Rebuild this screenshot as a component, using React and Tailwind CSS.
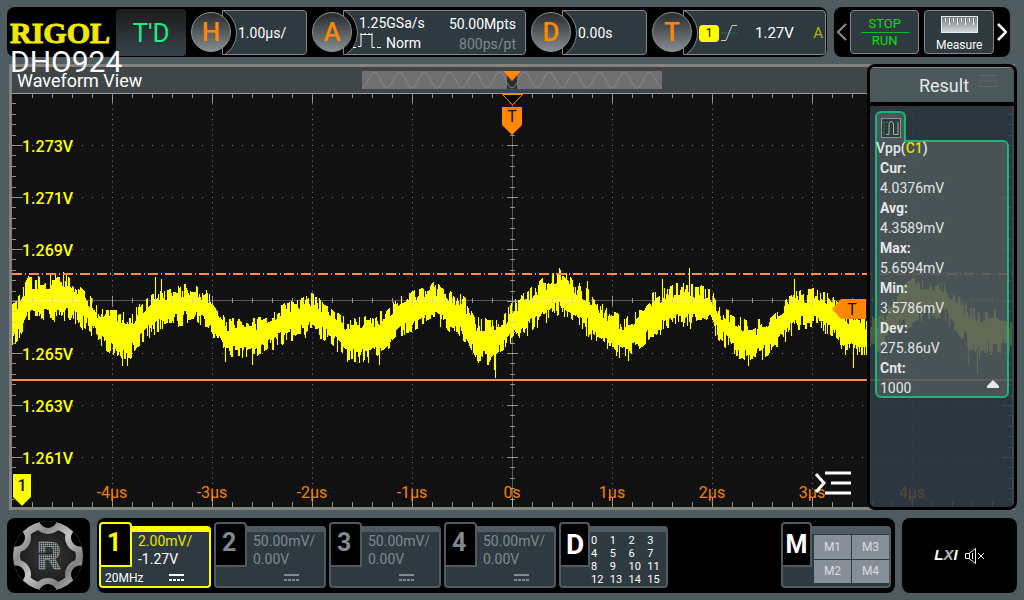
import React from "react";

const ENVELOPE = [
  [12, 308, 343], [20, 300, 330], [28, 284, 313], [40, 285, 315], [62, 280, 312], [75, 289, 316],
  [90, 302, 326], [100, 317, 340], [120, 317, 352], [130, 322, 350], [145, 306, 332], [160, 299, 322],
  [180, 291, 318], [195, 293, 314], [210, 300, 325], [225, 326, 352], [240, 324, 352], [255, 326, 353],
  [270, 320, 343], [290, 308, 333], [310, 301, 328], [330, 310, 336], [345, 325, 352], [350, 325, 354],
  [370, 323, 355], [385, 318, 346], [400, 303, 330], [420, 292, 322], [435, 290, 316], [450, 297, 326],
  [465, 306, 335], [475, 325, 354], [490, 327, 357], [505, 320, 345], [512, 310, 336], [525, 299, 328],
  [540, 288, 318], [560, 276, 306], [575, 289, 316], [590, 299, 335], [605, 316, 343], [622, 325, 352],
  [635, 321, 347], [650, 303, 331], [665, 294, 326], [680, 291, 318], [690, 291, 320], [710, 297, 319],
  [720, 314, 335], [735, 323, 347], [750, 331, 358], [765, 325, 350], [780, 311, 340], [795, 299, 322],
  [815, 295, 322], [830, 302, 328], [845, 318, 346], [866, 327, 350], [880, 320, 342], [895, 304, 328],
  [912, 285, 318], [930, 287, 310], [945, 289, 314], [960, 305, 330], [975, 318, 350], [995, 315, 345],
  [1012, 325, 346],
];

const SPIKES = {
  55: [274, 312], 63: [272, 312], 122: [320, 366], 127: [322, 366], 155: [277, 322], 161: [279, 320],
  225: [326, 362], 252: [322, 365], 379: [325, 365], 494: [330, 370], 495: [330, 378], 560: [270, 306],
  587: [281, 318], 628: [325, 361], 662: [279, 320], 689: [268, 322], 748: [330, 366], 794: [279, 324],
  853: [320, 368], 968: [315, 364], 977: [320, 374],
};

function buildWave() {
  let seed = 924;
  const rand = () => {
    seed = (seed * 1103515245 + 12345) % 2147483648;
    return seed / 2147483648;
  };
  let d = "";
  let k = 0;
  let jt = 0.5;
  let jb = 0.5;
  for (let x = 12; x <= 1012; x += 1) {
    while (k < ENVELOPE.length - 2 && ENVELOPE[k + 1][0] < x) k += 1;
    const [x0, t0, b0] = ENVELOPE[k];
    const [x1, t1, b1] = ENVELOPE[k + 1];
    const f = (x - x0) / (x1 - x0);
    if (rand() > 0.35) jt = rand();
    if (rand() > 0.35) jb = rand();
    let top = t0 + (t1 - t0) * f + 6 - jt * 15;
    let bottom = b0 + (b1 - b0) * f - 6 + jb * 15;
    if (SPIKES[x]) [top, bottom] = SPIKES[x];
    d += `M${x + 0.5} ${Math.round(top)}V${Math.round(bottom)}`;
  }
  return d;
}

const WAVE = buildWave();
const COLS = [112, 212, 312, 412, 612, 712, 812, 912];
const ROWS = [145, 197, 249, 353, 405, 457];
const VOLTS = [[145, "1.273V"], [197, "1.271V"], [249, "1.269V"], [301, "1.267V"], [353, "1.265V"], [405, "1.263V"], [457, "1.261V"]];
const TIMES = [[112, "-4µs"], [212, "-3µs"], [312, "-2µs"], [412, "-1µs"], [512, "0s"], [612, "1µs"], [712, "2µs"], [812, "3µs"], [912, "4µs"]];

function buildTicks() {
  let d = "";
  for (let x = 32; x < 1012; x += 20) {
    const big = (x - 12) % 100 === 0;
    d += `M${x + 0.5} 94v${big ? 9 : 4}M${x + 0.5} 507v-${big ? 9 : 5}M${x + 0.5} ${big ? 296 : 298}v${big ? 10 : 5}`;
  }
  for (let i = 1; i < 40; i += 1) {
    const y = Math.round(93 + i * 10.4) + 0.5;
    const big = i % 5 === 0;
    d += `M12 ${y}h${big ? 10 : 4}M1012 ${y}h-${big ? 10 : 4}M${big ? 507 : 510} ${y}h${big ? 11 : 5}`;
  }
  return d;
}

const TICKS = buildTicks();

function Plot() {
  return (
    <svg viewBox="12 93 1000 414" className="block h-auto w-full bg-[#111111]" role="img" aria-label="Channel 1 waveform">
      <g stroke="#7c7c7c" strokeWidth="1">
        {COLS.map((x) => (
          <line key={x} x1={x + 0.5} x2={x + 0.5} y1="93" y2="507" strokeDasharray="1 4.2" />
        ))}
        {ROWS.map((y) => (
          <line key={y} x1="12" x2="1012" y1={y + 0.5} y2={y + 0.5} strokeDasharray="1 9" />
        ))}
      </g>
      <g fontFamily="Roboto, sans-serif" fontSize="16" fontWeight="500" fill="#ffff00">
        {VOLTS.map(([y, t]) => (
          <text key={t} x="22" y={y + 7}>{t}</text>
        ))}
      </g>
      <path d={WAVE} stroke="#ffff00" strokeWidth="1.1" fill="none" />
      <path d="M12 300.5H1012M512.5 93V507" stroke="#ffffff" strokeOpacity="0.3" />
      <path d={TICKS} stroke="#c4c4c4" strokeOpacity="0.7" />
      <path d="M12 93.5H1012" stroke="#9a9f9f" />
      <path d="M12 274H1012" stroke="#ff8c4a" strokeWidth="2" strokeDasharray="10 3 1 3" />
      <path d="M12 380H1012" stroke="#ff8c4a" strokeWidth="2" />
      <g fontFamily="Roboto, sans-serif" fontSize="16" fill="#f58200" textAnchor="middle">
        {TIMES.map(([x, t]) => (
          <text key={t} x={x} y="498">{t}</text>
        ))}
      </g>
      <path d="M502.500 94.500H522.500L512.500 105Z" fill="#000" stroke="#ff8800" />
      <path d="M502 107H522V125L512 135L502 125Z" fill="#ff8800" />
      <text x="512" y="122" fontFamily="Roboto, sans-serif" fontSize="16" fill="#111" textAnchor="middle">T</text>
      <path d="M866 299V319H841L832 309L841 299Z" fill="#ff8800" />
      <text x="852" y="315" fontFamily="Roboto, sans-serif" fontSize="16" fill="#111" textAnchor="middle">T</text>
      <path d="M12.500 473.500H31.500V497L22 506.500L12.500 497Z" fill="#ffff00" stroke="#000" />
      <text x="22" y="491" fontFamily="Roboto, sans-serif" fontSize="16" fontWeight="500" fill="#111" textAnchor="middle">1</text>
    </svg>
  );
}

function MiniWave() {
  let d = "M0 17";
  for (let x = 0; x <= 300; x += 1) d += `L${x} ${(9 - 8 * Math.cos(((x - 12.5) / 25) * 2 * Math.PI)).toFixed(1)}`;
  d = d.replace("M0 17L", "M");
  return (
    <svg viewBox="0 0 300 18" className="block h-[18px] w-[300px] bg-[#707070]" aria-hidden="true">
      <path d={d} fill="none" stroke="#878b8b" />
      <rect x="145" width="10" height="18" fill="#2c3133" />
      <path d="M145 12q5 10 10 0" fill="none" stroke="#878b8b" />
      <path d="M141 0H159L150 10Z" fill="#ff8800" />
    </svg>
  );
}

function Knob({ letter, className, children }) {
  return (
    <button type="button" aria-label={letter} className={"relative flex h-[45px] items-stretch text-left " + className}>
      <span className="z-10 mt-[2px] flex size-10 shrink-0 items-center justify-center rounded-full border border-[#8a9398] bg-linear-to-b from-[#2a2c2e] to-[#868e92] pt-[2px] text-[26px] font-medium text-[#ff8800]">
        {letter}
      </span>
      <span className="relative -ml-[9px] flex min-w-0 flex-1 overflow-hidden rounded-r-[4px] border border-[#7f898d] bg-[#2e3940]">
        <span className="absolute -left-[38px] -top-[4px] size-[52px] rounded-full border border-[#7f898d] bg-black" />
        <span className="relative flex min-w-0 flex-1 items-center pl-[15px] pt-[2px] text-[14px] leading-5 text-white">{children}</span>
      </span>
    </button>
  );
}

function DcIcon({ color }) {
  return (
    <svg viewBox="0 0 15 7" className="h-[7px] w-[15px]" aria-label="DC coupling">
      <path d="M0 1H15" stroke={color} strokeWidth="2" />
      <path d="M0 6H15" stroke={color} strokeWidth="2" strokeDasharray="3 1" />
    </svg>
  );
}

function Channel({ n, scale, offset, limit, active }) {
  const edge = active ? "border-[#ffff00]" : "border-[#4e5b61]";
  return (
    <button type="button" className="relative h-[66px] w-28 pt-1 text-left">
      <span className={"flex h-[62px] flex-col rounded-[4px] border-2 border-t-[6px] bg-[#2e3940] pl-[37px] text-[14px] leading-[19px] " + edge}>
        <span className={active ? "whitespace-nowrap text-[#e8e800]" : "whitespace-nowrap text-[#7f898f]"}>{scale}</span>
        <span className={active ? "-mt-px text-white" : "-mt-px text-[#7f898f]"}>{offset}</span>
        <span className="-ml-[33px] flex h-[17px] items-center pr-[25px]">
          <span className="pt-px text-[12px] leading-4 text-white">{limit}</span>
          <span className="ml-auto"><DcIcon color={active ? "#ffffff" : "#7f898f"} /></span>
        </span>
      </span>
      <span className={"absolute left-0 top-0 flex h-[45px] w-[33px] items-center rounded-t-[4px] border-2 bg-black pb-[3px] pl-[6px] text-[25px] font-bold " + edge + (active ? " text-[#ffff00]" : " text-[#7f898f]")}>
        {n}
      </span>
    </button>
  );
}

function Gear() {
  const notches = [0, 60, 120, 180, 240, 300];
  return (
    <svg viewBox="0 0 83 75" className="h-[75px] w-[83px]" aria-hidden="true">
      <defs>
        <linearGradient id="steel" x1="0" y1="0" x2="1" y2="1">
          <stop offset="0" stopColor="#d8d8d8" />
          <stop offset="0.3" stopColor="#8c8c8c" />
          <stop offset="0.5" stopColor="#c4c4c4" />
          <stop offset="0.75" stopColor="#808080" />
          <stop offset="1" stopColor="#cfcfcf" />
        </linearGradient>
        <radialGradient id="core">
          <stop offset="0" stopColor="#3a3a38" />
          <stop offset="1" stopColor="#1d1d1c" />
        </radialGradient>
        <pattern id="hatch" width="2" height="2" patternUnits="userSpaceOnUse">
          <rect width="2" height="2" fill="#5c6266" />
          <rect width="1" height="1" fill="#a4a9ac" />
          <rect x="1" y="1" width="1" height="1" fill="#34393c" />
        </pattern>
        <clipPath id="disc"><circle cx="41" cy="38" r="35" /></clipPath>
        <mask id="hub">
          <circle cx="41" cy="38" r="28" fill="#fff" />
          {notches.map((a) => (
            <circle key={a} cx="41" cy="1" r="15" fill="#000" transform={`rotate(${a} 41 38)`} />
          ))}
        </mask>
      </defs>
      <circle cx="41" cy="38" r="35" fill="url(#steel)" />
      <circle cx="41" cy="38" r="28" fill="url(#core)" mask="url(#hub)" />
      <g clipPath="url(#disc)">
        {notches.map((a) => (
          <circle key={a} cx="41" cy="1" r="9" fill="#000" transform={`rotate(${a} 41 38)`} />
        ))}
      </g>
      <text x="42" y="51" textAnchor="middle" fontFamily="Inter, sans-serif" fontWeight="700" fontSize="37" fill="url(#hatch)" stroke="#a0a6a9" strokeWidth="0.6">R</text>
      <path d="M32 35.500H46" stroke="#232322" strokeWidth="2" />
    </svg>
  );
}

const STATS = [
  ["Cur:", "4.0376mV"], ["Avg:", "4.3589mV"], ["Max:", "5.6594mV"],
  ["Min:", "3.5786mV"], ["Dev:", "275.86uV"], ["Cnt:", "1000"],
];

function ResultPanel() {
  return (
    <aside className="absolute bottom-0 right-0 top-0 flex w-[150px] flex-col overflow-hidden rounded-[8px] border-[3px] border-black bg-[#313d46]/85">
      <header className="relative flex h-[35px] shrink-0 items-center justify-center border-t border-[#7f898d] bg-[#4a575b] pl-1 text-[18px] text-[#e6e8e8]">
        <h2>Result</h2>
        <svg viewBox="0 0 20 14" className="absolute right-4 top-[6px] h-[14px] w-5" aria-hidden="true">
          <path d="M0 1.500H20M0 7H20M0 12.500H20" stroke="#5c686b" strokeWidth="1" />
        </svg>
      </header>
      <div className="h-1 shrink-0 bg-black" />
      <section className="px-[5px] pt-[5px]">
        <div className="relative z-10 -mb-[2px] flex h-[31px] w-[31px] items-center justify-center rounded-t-[6px] border-2 border-b-0 border-[#1cb474] bg-[#4a575b]">
          <svg viewBox="0 0 20 20" className="size-5" aria-hidden="true">
            <rect x="0.500" y="0.500" width="19" height="19" fill="#30393b" stroke="#8c9494" />
            <path d="M5 16.500H8V6L9.500 3.500H11L12.500 6V16.500H17V4" fill="none" stroke="#a9b0b0" />
            <path d="M3 4V16M1.500 4H4.500M1.500 16H4.500M5 4H8" stroke="#1f8f5c" strokeDasharray="2 1" />
          </svg>
        </div>
        <div className="relative h-[258px] rounded-b-[6px] rounded-tr-[6px] border-2 border-[#1cb474] bg-[#7e8985]/35 pl-[3px] text-[14px] leading-5 text-[#e4e6e6]">
          <h3 className="-ml-1 -mt-1 font-medium">
            Vpp(<span className="text-[#e6dc00]">C1</span>)
          </h3>
          <dl>
            {STATS.map(([k, v]) => (
              <div key={k}>
                <dt className="font-bold">{k}</dt>
                <dd>{v}</dd>
              </div>
            ))}
          </dl>
          <svg viewBox="0 0 12 8" className="absolute bottom-2 right-2 h-2 w-3" aria-hidden="true">
            <path d="M6 0L12 6V8H0V6Z" fill="#e8e8e8" />
          </svg>
        </div>
      </section>
    </aside>
  );
}

export default function App() {
  return (
    <div className="min-h-screen overflow-x-hidden bg-[#4e5c62] px-[7px] pb-[7px] pt-[7px] font-[Roboto,sans-serif]">
      <header className="flex h-[50px] gap-[7px] pr-[7px]">
        <div className="relative flex flex-1 items-center gap-[5px] rounded-[8px] bg-black pr-px">
          <div className="w-[104px] shrink-0 pl-[3px]">
            <span className="block pt-[2px] font-[Liberation_Serif,serif] text-[30px] font-bold leading-[44px] text-[#f0e800] [-webkit-text-stroke:1px_#f0e800]">RIGOL</span>
            <h1 className="absolute left-[3px] top-[40px] z-20 text-[30px] leading-[30px] text-white">DHO924</h1>
          </div>
          <div className="flex h-[47px] w-[70px] shrink-0 items-center justify-center rounded-[4px] bg-linear-to-b from-[#1b1c1c] to-[#38434a] pt-[2px] text-[26px] text-[#12f088]">
            T&apos;D
          </div>
          <Knob letter="H" className="grow basis-[116px]">1.00µs/</Knob>
          <Knob letter="A" className="grow basis-[214px]">
            <span className="flex flex-1 flex-col pb-px">
              <span>1.25GSa/s</span>
              <span className="-ml-[6px] flex gap-[5px]">
                <svg viewBox="0 0 28 16" className="h-4 w-7" aria-hidden="true">
                  <path d="M0 14.500H3M5 13.500H8V1.500H19V14.500H22M24 14.500H28" fill="none" stroke="#fff" />
                  <path d="M8 0V2M12 0V1M16 0V1M19 0V2" stroke="#fff" />
                </svg>
                Norm
              </span>
            </span>
            <span className="flex flex-col pr-[9px] pt-[2px] text-right">
              <span>50.00Mpts</span>
              <span className="text-[#7f898f]">800ps/pt</span>
            </span>
          </Knob>
          <Knob letter="D" className="grow basis-[116px]">0.00s</Knob>
          <Knob letter="T" className="grow basis-[174px]">
            <span className="flex h-[17px] w-5 items-center justify-center rounded-[4px] bg-[#ffff00] text-[12px] text-black">1</span>
            <svg viewBox="0 0 16 18" className="ml-[2px] h-[18px] w-4" aria-hidden="true">
              <path d="M0 9H16" stroke="#1f7a50" strokeDasharray="2 1" />
              <path d="M0 16.500H5L11 1.500H16" fill="none" stroke="#c8cccc" />
            </svg>
            <span className="ml-[18px] flex-1 text-[15px]">1.27V</span>
            <span className="pr-[2px] text-[15px] text-[#b4b400]">A</span>
          </Knob>
        </div>
        <nav className="flex w-44 shrink-0 items-center rounded-[8px] bg-black px-[3px]" aria-label="Quick actions">
          <button type="button" aria-label="Previous" className="w-[13px]">
            <svg viewBox="0 0 10 18" className="h-[18px] w-[10px]"><path d="M9 1L1 9L9 17" fill="none" stroke="#8c8c8c" strokeWidth="2" /></svg>
          </button>
          <button type="button" className="flex h-11 w-[70px] flex-col items-center justify-center rounded-[4px] border border-[#7f898d] bg-[#2e3940] text-[13px] leading-4 text-[#00e400]">
            <span className="w-12 border-b border-[#00c020]">STOP</span>
            <span>RUN</span>
          </button>
          <button type="button" className="ml-[5px] flex h-11 w-[70px] flex-col items-center justify-end rounded-[4px] border border-[#7f898d] bg-[#2e3940] text-[12px] leading-[15px] text-white">
            <svg viewBox="0 0 37 17" className="h-[17px] w-[37px]" aria-hidden="true">
              <defs><linearGradient id="ruler" x2="0" y2="1"><stop offset="0" stopColor="#6f7a7e" /><stop offset="1" stopColor="#d4d8d8" /></linearGradient></defs>
              <rect x="0.500" y="0.500" width="36" height="16" fill="url(#ruler)" stroke="#e8ecec" />
              <path d="M4.500 2V6M8.500 2V9M12.500 2V6M16.500 2V9M20.500 2V6M24.500 2V9M28.500 2V6M32.500 2V9" stroke="#fff" />
            </svg>
            <span className="pt-[5px]">Measure</span>
          </button>
          <button type="button" aria-label="Next" className="ml-[3px] w-[10px]">
            <svg viewBox="0 0 10 18" className="h-[18px] w-[10px]"><path d="M1 1L9 9L1 17" fill="none" stroke="#fff" strokeWidth="2.500" /></svg>
          </button>
        </nav>
      </header>

      <main className="relative mt-[7px]">
        <div className="mx-[2px] border-[3px] border-[#868181]">
          <div className="grid h-[26px] grid-cols-[1fr_300px_1fr] items-center bg-[#404648]">
            <h2 className="pl-[5px] pt-[2px] text-[18px] leading-6 text-white">Waveform View</h2>
            <MiniWave />
          </div>
          <Plot />
        </div>
        <button type="button" aria-label="Expand list" className="absolute bottom-[14px] right-[166px]">
          <svg viewBox="0 0 36 26" className="h-[26px] w-9">
            <path d="M1 4L9 13L1 22" fill="none" stroke="#fff" strokeWidth="3" />
            <path d="M10 3H36M16 13H36M10 23H36" stroke="#fff" strokeWidth="3" />
          </svg>
        </button>
        <ResultPanel />
      </main>

      <footer className="mt-[8px] flex h-[75px] gap-[7px]">
        <button type="button" aria-label="Main menu" className="w-[83px] shrink-0 overflow-hidden rounded-[8px] bg-black">
          <Gear />
        </button>
        <div className="flex flex-1 items-center rounded-[8px] bg-black pb-px pl-[2px] pr-1">
          <div className="flex gap-[3px]">
            <Channel n="1" scale="2.00mV/" offset="-1.27V" limit="20MHz" active />
            <Channel n="2" scale="50.00mV/" offset="0.00V" />
            <Channel n="3" scale="50.00mV/" offset="0.00V" />
            <Channel n="4" scale="50.00mV/" offset="0.00V" />
            <button type="button" className="relative h-[66px] w-[109px] pt-1 text-left">
              <span className="grid h-[62px] grid-cols-4 rounded-[4px] border-2 border-t-[6px] border-[#4e5b61] bg-[#2e3940] pl-[30px] pt-[2px] text-[11px] leading-[13px] text-white">
                {Array.from({ length: 16 }, (_, i) => <span key={i}>{i}</span>)}
              </span>
              <span className="absolute left-0 top-0 flex h-[45px] w-[31px] items-center rounded-t-[4px] border-2 border-[#4e5b61] bg-black pl-[5px] text-[28px] font-bold text-white">D</span>
            </button>
          </div>
          <div className="relative ml-auto h-[66px] w-[110px] pt-1">
            <div className="flex h-[62px] rounded-[4px] border-2 border-t-[8px] border-[#4e5b61] bg-[#2e3940] pl-[31px]">
              <div className="grid flex-1 grid-cols-2 gap-px pb-[3px] pt-px text-[12px] text-[#d8dcde]">
                {["M1", "M3", "M2", "M4"].map((m) => (
                  <button key={m} type="button" className="bg-[#868f98]">{m}</button>
                ))}
              </div>
            </div>
            <span className="absolute left-0 top-0 flex h-[45px] w-[31px] items-center justify-center rounded-t-[4px] border-2 border-[#4e5b61] bg-black text-[25px] font-bold text-white">M</span>
          </div>
        </div>
        <div className="flex w-[115px] shrink-0 items-center justify-center gap-[7px] rounded-[8px] bg-black">
          <span className="font-[Liberation_Sans,sans-serif] text-[15px] font-bold italic text-white">
            L<span className="text-[#b8b8b8]">X</span>I
          </span>
          <svg viewBox="0 0 20 16" className="h-4 w-5" aria-label="Muted">
            <path d="M0.500 5.500H4L10.500 0.500V15.500L4 10.500H0.500ZM4.500 5.500V10.500M7.500 5V11M13 5L19 11M19 5L13 11" fill="none" stroke="#f0f0f0" />
          </svg>
        </div>
      </footer>
    </div>
  );
}
